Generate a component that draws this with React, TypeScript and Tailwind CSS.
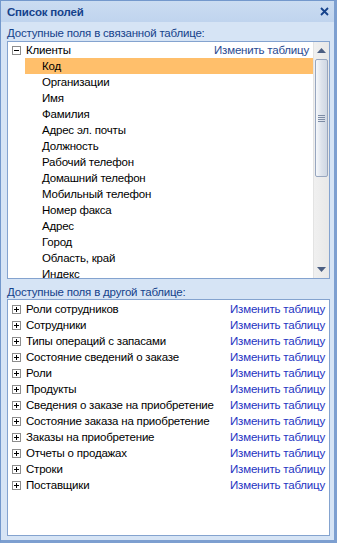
import React from 'react';

const linked = [
  'Код',
  'Организации',
  'Имя',
  'Фамилия',
  'Адрес эл. почты',
  'Должность',
  'Рабочий телефон',
  'Домашний телефон',
  'Мобильный телефон',
  'Номер факса',
  'Адрес',
  'Город',
  'Область, край',
  'Индекс',
];

const others = [
  'Роли сотрудников',
  'Сотрудники',
  'Типы операций с запасами',
  'Состояние сведений о заказе',
  'Роли',
  'Продукты',
  'Сведения о заказе на приобретение',
  'Состояние заказа на приобретение',
  'Заказы на приобретение',
  'Отчеты о продажах',
  'Строки',
  'Поставщики',
];

function TreeBox({ open }: { open: boolean }) {
  return (
    <span className="flex h-[9px] w-[9px] shrink-0 items-center justify-center border border-[#8c8c8c] bg-white">
      <svg width="7" height="7" viewBox="0 0 7 7">
        <rect x="1" y="3" width="5" height="1" fill="#000" />
        {!open && <rect x="3" y="1" width="1" height="5" fill="#000" />}
      </svg>
    </span>
  );
}

function Scrollbar() {
  return (
    <div className="flex w-[16px] shrink-0 flex-col border-l border-[#e3e3e3] bg-gradient-to-r from-[#f0f0f0] to-[#e8e8e8]">
      <div className="flex h-[17px] items-center justify-center">
        <svg width="9" height="5" viewBox="0 0 9 5">
          <path d="M4.5 0 L9 5 L0 5 Z" fill="#4b5e82" />
        </svg>
      </div>
      <div className="mx-[1px] flex h-[118px] items-center justify-center rounded-[2px] border border-[#97a6bf] bg-gradient-to-r from-[#f6f8fb] via-[#dde3ec] to-[#cfd7e3]">
        <div className="flex flex-col gap-[1px]">
          <span className="block h-[1px] w-[7px] bg-[#7d8ca5]" />
          <span className="block h-[1px] w-[7px] bg-[#7d8ca5]" />
          <span className="block h-[1px] w-[7px] bg-[#7d8ca5]" />
          <span className="block h-[1px] w-[7px] bg-[#7d8ca5]" />
        </div>
      </div>
      <div className="flex-1" />
      <div className="flex h-[17px] items-center justify-center">
        <svg width="9" height="5" viewBox="0 0 9 5">
          <path d="M0 0 L9 0 L4.5 5 Z" fill="#4b5e82" />
        </svg>
      </div>
    </div>
  );
}

export default function App() {
  return (
    <div
      className="flex h-[543px] w-[337px] flex-col border-t border-l border-[#7398cc] border-r-[3px] border-b-[3px] border-r-[#7d9fd0] border-b-[#7d9fd0] bg-[#d6e4f5] text-[11.5px] leading-[16px] tracking-[-0.2px]"
      style={{ fontFamily: '"Liberation Sans", Arial, sans-serif' }}
    >
      <div className="flex h-[21px] shrink-0 items-center justify-between bg-gradient-to-b from-[#cadcf1] to-[#c0d4ee] pl-[6px] pr-[5px]">
        <span className="font-bold text-[#15428b]">Список полей</span>
        <svg width="9" height="9" viewBox="0 0 9 9">
          <path d="M1 1 L8 8 M8 1 L1 8" stroke="#15428b" strokeWidth="1.8" />
        </svg>
      </div>

      <div className="flex flex-1 flex-col px-[6px] pb-[4px] pr-[4px]">
        <div className="pt-[3px] text-[#15428b]">Доступные поля в связанной таблице:</div>
        <div className="flex h-[238px] shrink-0 border border-[#84a3cf] bg-white">
          <div className="flex-1 overflow-hidden">
            <div className="flex h-[16px] items-center pl-[4px] pr-[4px]">
              <TreeBox open />
              <span className="ml-[5px] flex-1 text-black">Клиенты</span>
              <span className="text-[#2a4a91]">Изменить таблицу</span>
            </div>
            {linked.map((f, i) => (
              <div
                key={f}
                className={`ml-[17px] flex h-[16px] items-center pl-[17px] text-black ${i === 0 ? 'bg-[#ffbf6b]' : ''}`}
              >
                {f}
              </div>
            ))}
          </div>
          <Scrollbar />
        </div>

        <div className="h-[20px] pt-[6px] leading-[14px] text-[#15428b]">Доступные поля в другой таблице:</div>
        <div className="flex-1 border border-[#84a3cf] bg-white pt-[1px] pl-[4px] pr-[4px]">
          {others.map((t) => (
            <div key={t} className="flex h-[16px] items-center">
              <TreeBox open={false} />
              <span className="ml-[5px] min-w-0 flex-1 truncate text-black">{t}</span>
              <span className="shrink-0 text-[#1e33c2]">Изменить таблицу</span>
            </div>
          ))}
        </div>
      </div>
    </div>
  );
}
